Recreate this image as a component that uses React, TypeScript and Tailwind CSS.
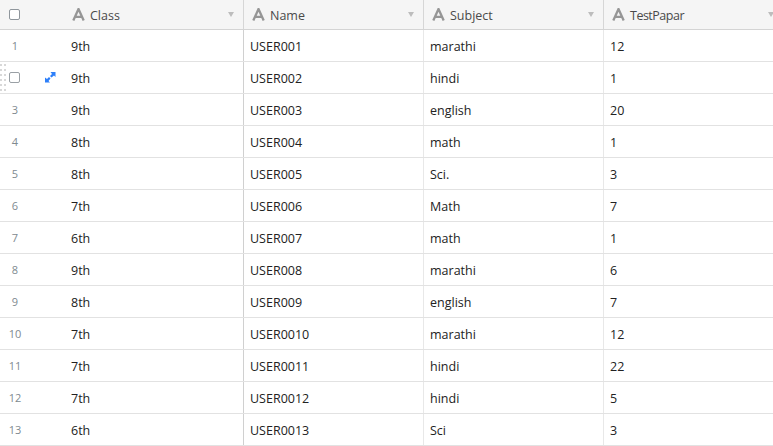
const rows = [
  ["9th", "USER001", "marathi", "12"],
  ["9th", "USER002", "hindi", "1"],
  ["9th", "USER003", "english", "20"],
  ["8th", "USER004", "math", "1"],
  ["8th", "USER005", "Sci.", "3"],
  ["7th", "USER006", "Math", "7"],
  ["6th", "USER007", "math", "1"],
  ["9th", "USER008", "marathi", "6"],
  ["8th", "USER009", "english", "7"],
  ["7th", "USER0010", "marathi", "12"],
  ["7th", "USER0011", "hindi", "22"],
  ["7th", "USER0012", "hindi", "5"],
  ["6th", "USER0013", "Sci", "3"],
];

function TextIcon() {
  return (
    <svg width="13" height="13" viewBox="0 0 13 13" className="shrink-0">
      <path d="M1.3 12.5 L6.5 1 L11.7 12.5 M3.2 8.8 H9.8" fill="none" stroke="#969696" strokeWidth="2.3" />
    </svg>
  );
}

function Caret() {
  return <div className="ml-auto h-0 w-0 border-x-[3.5px] border-t-[5px] border-x-transparent border-t-[#bdbdbd]" />;
}

function HeaderCell({ label, className, labelClass }: { label: string; className: string; labelClass?: string }) {
  return (
    <div className={`flex shrink-0 items-center border-r border-[#d6d6d6] pr-[9px] ${className}`}>
      <TextIcon />
      <span className={`ml-[5px] pt-[3px] text-[#4a4a4a] ${labelClass ?? ""}`}>{label}</span>
      <Caret />
    </div>
  );
}

function Grip() {
  return (
    <div className="absolute left-0 top-[2px] grid grid-cols-2 gap-x-[2px] gap-y-[3px]">
      {Array.from({ length: 12 }).map((_, i) => (
        <div key={i} className="h-[2px] w-[2px] bg-[#d8d8d8]" />
      ))}
    </div>
  );
}

export default function App() {
  return (
    <div className="h-[446px] w-[773px] overflow-hidden bg-white font-['Open_Sans','Noto_Sans',sans-serif] text-[12.5px] text-[#222]">
      <div className="flex h-[30px] border-b border-[#d4d4d4] bg-[#f5f5f5]">
        <div className="flex w-[72px] shrink-0 items-center pl-[9px]">
          <div className="-mt-[1px] h-[11px] w-[11px] rounded-[2px] border border-[#8f969c] bg-white" />
        </div>
        <HeaderCell label="Class" className="w-[172px]" />
        <HeaderCell label="Name" className="w-[180px] pl-[8px]" />
        <HeaderCell label="Subject" className="w-[180px] pl-[8px]" />
        <HeaderCell label="TestPapar" labelClass="tracking-[-0.5px]" className="w-[180px] pl-[8px]" />
      </div>
      {rows.map((r, i) => (
        <div key={i} className="flex h-[32px] border-b border-[#e2e2e2]">
          <div className="relative flex w-[71px] shrink-0 items-center">
            {i === 1 ? (
              <>
                <Grip />
                <div className="-mt-[1px] ml-[9px] h-[11px] w-[11px] rounded-[2px] border border-[#9aa0a5]" />
                <svg width="11" height="11" viewBox="0 0 11 11" className="ml-[25px]">
                  <path d="M5.5 0 H10.5 V5 L9 3.5 L6.5 5.5 L5 4 L7 2 Z" fill="#2d7ff9" />
                  <path d="M0 5.5 V10.5 H5 L3.5 9 L5.5 6.5 L4 5 L2 7 Z" fill="#2d7ff9" />
                </svg>
              </>
            ) : (
              <span className="w-[30px] pt-[1px] text-center text-[11px] text-[#808a90]">{i + 1}</span>
            )}
          </div>
          <div className="flex w-[173px] shrink-0 items-center border-r border-[#d0d0d0] pt-[3px]">{r[0]}</div>
          <div className="flex w-[180px] shrink-0 items-center border-r border-[#e8e8e8] pl-[6px] pt-[3px]">{r[1]}</div>
          <div className="flex w-[180px] shrink-0 items-center border-r border-[#e8e8e8] pl-[6px] pt-[3px]">{r[2]}</div>
          <div className="flex w-[169px] shrink-0 items-center pl-[6px] pt-[3px]">{r[3]}</div>
        </div>
      ))}
    </div>
  );
}
